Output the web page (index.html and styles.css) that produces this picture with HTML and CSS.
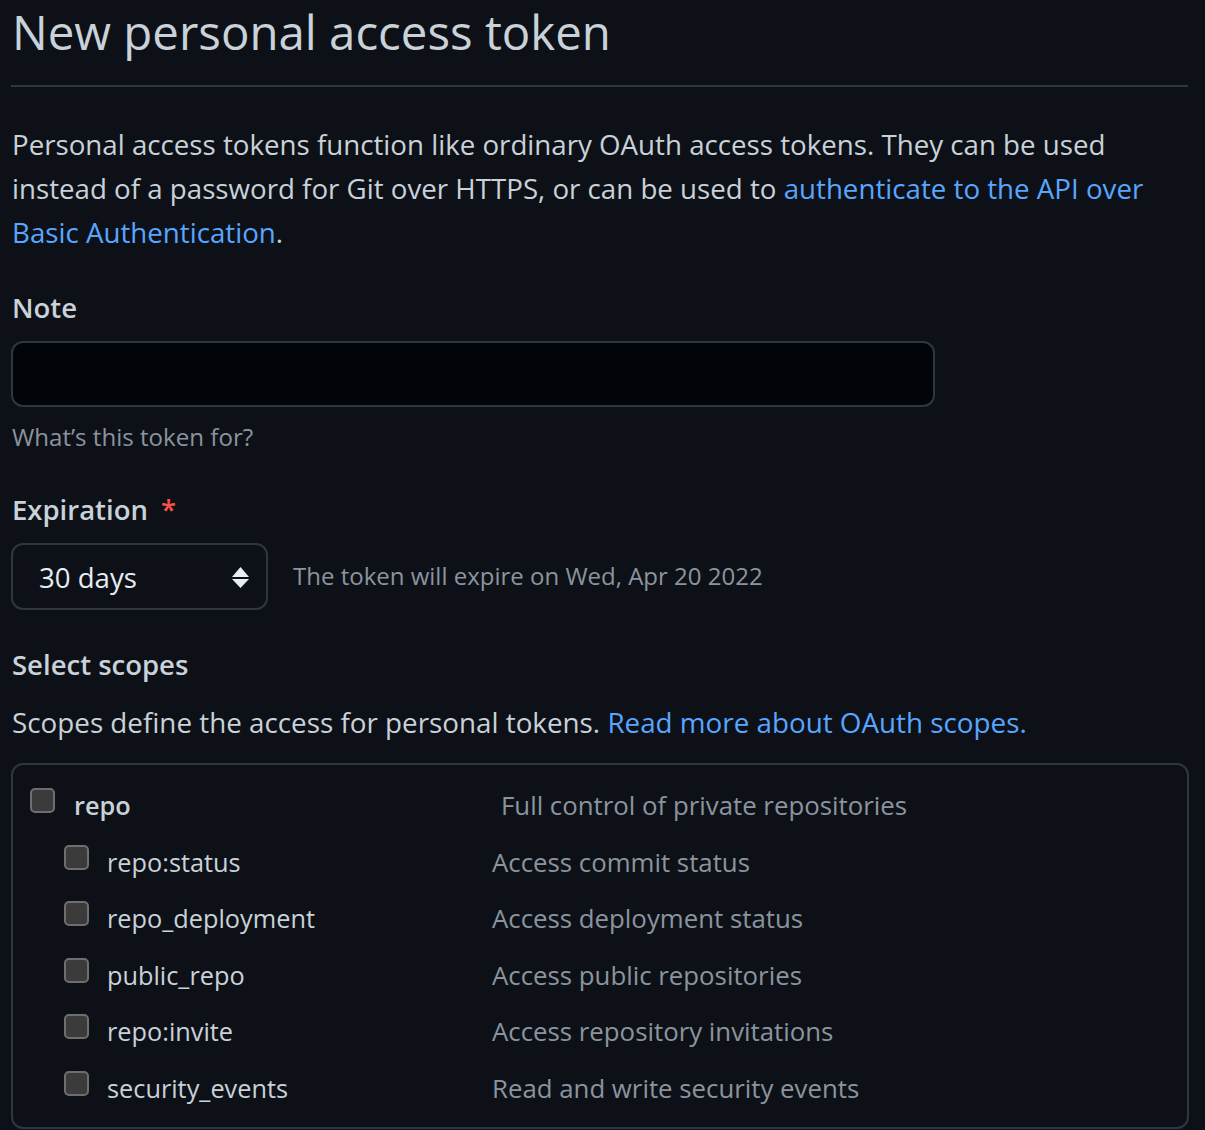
FILE: index.html
```html
<!DOCTYPE html>
<html lang="en">
<head>
<meta charset="utf-8">
<title>New personal access token</title>
<link rel="stylesheet" href="styles.css">
</head>
<body>
<div class="page">
  <div class="subhead">
    <h2 class="subhead-title">New personal access token</h2>
  </div>
  <p class="lead">Personal access tokens function like ordinary OAuth access tokens. They can be used instead of a password for Git over HTTPS, or can be used to <a href="#">authenticate to the API over Basic Authentication</a>.</p>

  <div class="form-group">
    <label class="label" for="note">Note</label>
    <input id="note" class="input" type="text">
    <p class="hint">What’s this token for?</p>
  </div>

  <div class="form-group exp">
    <div class="label">Expiration <span class="req">*</span></div>
    <div class="exp-row">
      <div class="select">
        <span>30 days</span>
        <svg class="arrows" width="17" height="22" viewBox="0 0 17 22"><path d="M8.5 0 L17 10 L0 10 Z M0 12 L17 12 L8.5 21 Z" fill="#e6edf3"/></svg>
      </div>
      <span class="exp-note">The token will expire on Wed, Apr 20 2022</span>
    </div>
  </div>

  <h3 class="label scopes-title">Select scopes</h3>
  <p class="scopes-desc">Scopes define the access for personal tokens. <a href="#">Read more about OAuth scopes.</a></p>

  <div class="scopes">
    <div class="row parent">
      <span class="cb"></span>
      <span class="name">repo</span>
      <span class="desc">Full control of private repositories</span>
    </div>
    <div class="row child">
      <span class="cb"></span>
      <span class="name">repo:status</span>
      <span class="desc">Access commit status</span>
    </div>
    <div class="row child">
      <span class="cb"></span>
      <span class="name">repo_deployment</span>
      <span class="desc">Access deployment status</span>
    </div>
    <div class="row child">
      <span class="cb"></span>
      <span class="name">public_repo</span>
      <span class="desc">Access public repositories</span>
    </div>
    <div class="row child">
      <span class="cb"></span>
      <span class="name">repo:invite</span>
      <span class="desc">Access repository invitations</span>
    </div>
    <div class="row child">
      <span class="cb"></span>
      <span class="name">security_events</span>
      <span class="desc">Read and write security events</span>
    </div>
  </div>
</div>
</body>
</html>
```

FILE: styles.css
```css
html, body {
  margin: 0;
  padding: 0;
  background: #0d1117;
}
body {
  font-family: "Open Sans", "Noto Sans", sans-serif;
  color: #c9d1d9;
  height: 1130px;
  overflow: hidden;
}
a {
  color: #58a6ff;
  text-decoration: none;
}
.page {
  width: 1177px;
  margin-left: 11px;
}
.subhead {
  border-bottom: 2px solid #30363d;
  height: 91px;
  box-sizing: border-box;
  margin-top: -4px;
}
.subhead-title {
  margin: 0;
  font-size: 47.4px;
  font-weight: 400;
  line-height: 72px;
  padding-left: 1px;
  color: #c9d1d9;
}
.lead {
  margin: 35px 0 0 1px;
  font-size: 27.7px;
  line-height: 44px;
}
.form-group {
  margin-top: 32px;
}
.label {
  display: block;
  font-size: 27.5px;
  font-weight: 600;
  line-height: 44px;
  margin: 0 0 0 1px;
}
.input {
  display: block;
  box-sizing: border-box;
  width: 924px;
  height: 66px;
  margin: 11px 0 0 0;
  background: #010409;
  border: 2px solid #30363d;
  border-radius: 12px;
  outline: none;
}
.hint {
  margin: 11px 0 0 1px;
  font-size: 24.1px;
  line-height: 37px;
  color: #8b949e;
}
.exp {
  margin-top: 33px;
}
.req {
  color: #f85149;
  margin-left: 6px;
}
.exp-row {
  display: flex;
  align-items: center;
  margin-top: 11px;
}
.select {
  box-sizing: border-box;
  width: 257px;
  height: 67px;
  border: 2px solid #30363d;
  border-radius: 12px;
  display: flex;
  align-items: center;
  justify-content: space-between;
  padding: 0 17px 0 26px;
  font-size: 27.6px;
  color: #e6edf3;
}
.arrows {
  display: block;
  margin-top: 2px;
}
.exp-note {
  margin-left: 25px;
  font-size: 24px;
  color: #8b949e;
  margin-top: -3px;
}
.scopes-title {
  margin-top: 33px;
}
.scopes-desc {
  margin: 13px 0 0 1px;
  font-size: 27.8px;
  line-height: 44px;
}
.scopes {
  margin-top: 19px;
  box-sizing: border-box;
  width: 1178px;
  height: 366px;
  border: 2px solid #30363d;
  border-radius: 12px;
  padding-top: 12px;
}
.row {
  display: flex;
  align-items: flex-start;
  height: 56.6px;
  line-height: 56px;
}
.cb {
  flex: none;
  box-sizing: border-box;
  width: 25px;
  height: 25px;
  border: 2px solid #6e6e6e;
  border-radius: 5px;
  background: #3b3b3b;
  margin-top: 11px;
}
.name {
  font-size: 25.3px;
}
.parent {
  padding-left: 17px;
}
.parent .name {
  font-weight: 600;
  width: 427px;
  margin-left: 19px;
}
.child {
  padding-left: 51px;
}
.child .name {
  width: 385px;
  margin-left: 18px;
}
.desc {
  color: #8b949e;
  font-size: 25.8px;
}
```
